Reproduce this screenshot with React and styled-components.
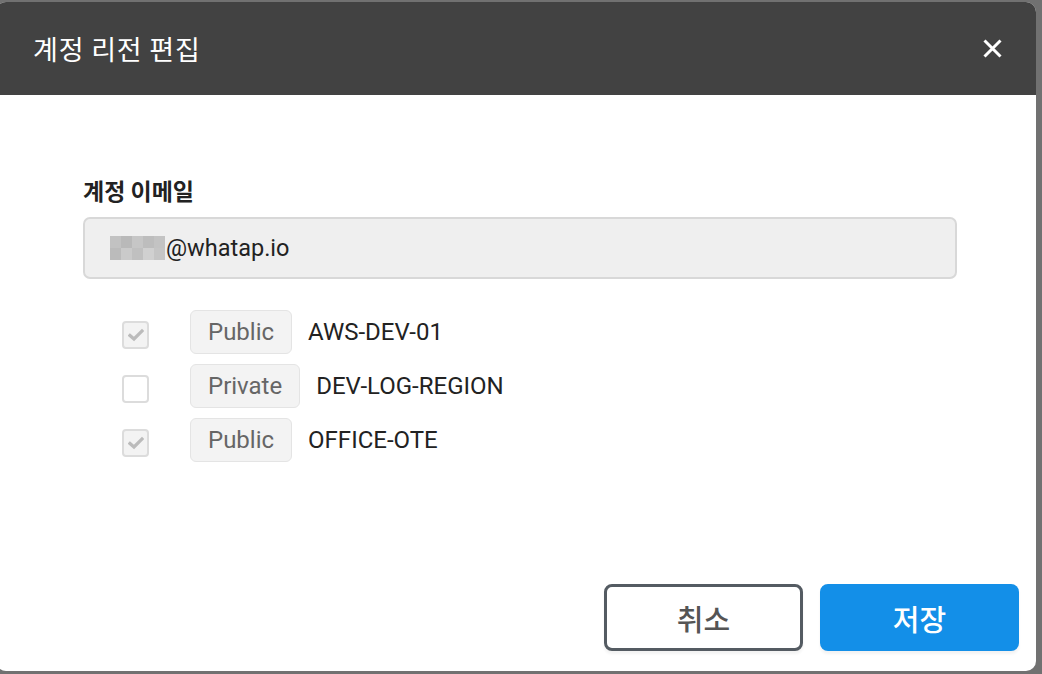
import React from "react";
import styled, { createGlobalStyle } from "styled-components";

const Global = createGlobalStyle`
  html, body { margin: 0; padding: 0; }
  body {
    background: #717171;
    font-family: Roboto, "Noto Sans CJK KR", sans-serif;
    overflow: hidden;
  }
`;

const Backdrop = styled.div`
  width: 1042px;
  height: 674px;
  padding-top: 2px;
  box-sizing: border-box;
  background: #717171;
`;

const Modal = styled.div`
  margin-left: -4px;
  width: 1040px;
  height: 669px;
  border-radius: 10px;
  background: #fff;
  overflow: hidden;
  display: flex;
  flex-direction: column;
`;

const Header = styled.div`
  height: 93px;
  flex: none;
  background: #424242;
  display: flex;
  align-items: center;
  justify-content: space-between;
  padding: 0 34px 0 37px;
`;

const Title = styled.h2`
  margin: 0;
  color: #fff;
  font-family: "Noto Sans CJK KR", sans-serif;
  font-weight: 400;
  font-size: 27px;
  letter-spacing: 0.8px;
`;

const CloseButton = styled.button`
  width: 19px;
  height: 19px;
  padding: 0;
  border: 0;
  background: none;
  display: flex;
  cursor: pointer;
`;

const Body = styled.div`
  flex: 1;
  padding: 80px 0 0 87px;
  display: flex;
  flex-direction: column;
`;

const Label = styled.div`
  font-family: "Noto Sans CJK KR", sans-serif;
  font-weight: 700;
  font-size: 23px;
  color: #222;
  line-height: 30px;
`;

const EmailBox = styled.div`
  margin-top: 12px;
  width: 874px;
  height: 62px;
  box-sizing: border-box;
  background: #efefef;
  border: 2px solid #d8d8d8;
  border-radius: 7px;
  display: flex;
  align-items: center;
  padding-left: 25px;
  font-size: 23.5px;
  color: #222;
`;

const Mosaic = styled.span`
  display: grid;
  grid-template-columns: repeat(5, 11px);
  grid-template-rows: repeat(2, 12px);
  margin-right: 1px;
`;

const Pixel = styled.span`
  background: ${(p) => p.$c};
`;

const List = styled.div`
  margin-top: 31px;
  padding-left: 39px;
  display: flex;
  flex-direction: column;
  gap: 10px;
`;

const Row = styled.label`
  display: flex;
  align-items: center;
  height: 44px;
`;

const Check = styled.span`
  width: 27px;
  height: 28px;
  box-sizing: border-box;
  border: 2px solid #dcdcdc;
  border-radius: 4px;
  background: ${(p) => (p.$checked ? "#f3f3f3" : "#fff")};
  display: flex;
  align-items: center;
  justify-content: center;
  margin-top: 5px;
`;

const Badge = styled.span`
  margin-left: 41px;
  height: 44px;
  box-sizing: border-box;
  padding: 0 17px;
  border: 1px solid #e4e4e4;
  border-radius: 6px;
  background: #f3f3f3;
  color: #666;
  font-size: 24px;
  display: flex;
  align-items: center;
`;

const RegionName = styled.span`
  margin-left: 16px;
  font-size: 24px;
  color: #222;
`;

const Footer = styled.div`
  display: flex;
  justify-content: flex-end;
  gap: 17px;
  padding: 0 17px 20px 0;
`;

const Button = styled.button`
  width: 199px;
  height: 67px;
  box-sizing: border-box;
  border-radius: 8px;
  font-family: "Noto Sans CJK KR", sans-serif;
  font-size: 29px;
  font-weight: 500;
  cursor: pointer;
  box-shadow: 0 3px 3px rgba(0, 0, 0, 0.05);
  border: ${(p) => (p.$primary ? "0" : "3px solid #545b62")};
  background: ${(p) => (p.$primary ? "#138fe8" : "#fff")};
  color: ${(p) => (p.$primary ? "#fff" : "#555")};
`;

const mosaic = [
  "#c2c2c2", "#b9b9b9", "#c6c6c6", "#bdbdbd", "#c3c3c3",
  "#bbbbbb", "#cacaca", "#c0c0c0", "#d0d0d0", "#c5c5c5",
];

const CheckMark = () => (
  <svg width="16" height="14" viewBox="0 0 16 14">
    <path d="M2 7.5 L6 11 L14 3" fill="none" stroke="#bbbbbb" strokeWidth="3.2" strokeLinecap="square" />
  </svg>
);

const regions = [
  { checked: true, type: "Public", name: "AWS-DEV-01" },
  { checked: false, type: "Private", name: "DEV-LOG-REGION" },
  { checked: true, type: "Public", name: "OFFICE-OTE" },
];

export default function App() {
  return (
    <>
      <Global />
      <Backdrop>
        <Modal>
          <Header>
            <Title>계정 리전 편집</Title>
            <CloseButton aria-label="close">
              <svg width="19" height="19" viewBox="0 0 19 19">
                <path d="M1.5 1.5 L17.5 17.5 M17.5 1.5 L1.5 17.5" stroke="#fff" strokeWidth="3" />
              </svg>
            </CloseButton>
          </Header>
          <Body>
            <Label>계정 이메일</Label>
            <EmailBox>
              <Mosaic>
                {mosaic.map((c, i) => (
                  <Pixel key={i} $c={c} />
                ))}
              </Mosaic>
              @whatap.io
            </EmailBox>
            <List>
              {regions.map((r) => (
                <Row key={r.name}>
                  <Check $checked={r.checked}>{r.checked && <CheckMark />}</Check>
                  <Badge>{r.type}</Badge>
                  <RegionName>{r.name}</RegionName>
                </Row>
              ))}
            </List>
          </Body>
          <Footer>
            <Button>취소</Button>
            <Button $primary>저장</Button>
          </Footer>
        </Modal>
      </Backdrop>
    </>
  );
}
